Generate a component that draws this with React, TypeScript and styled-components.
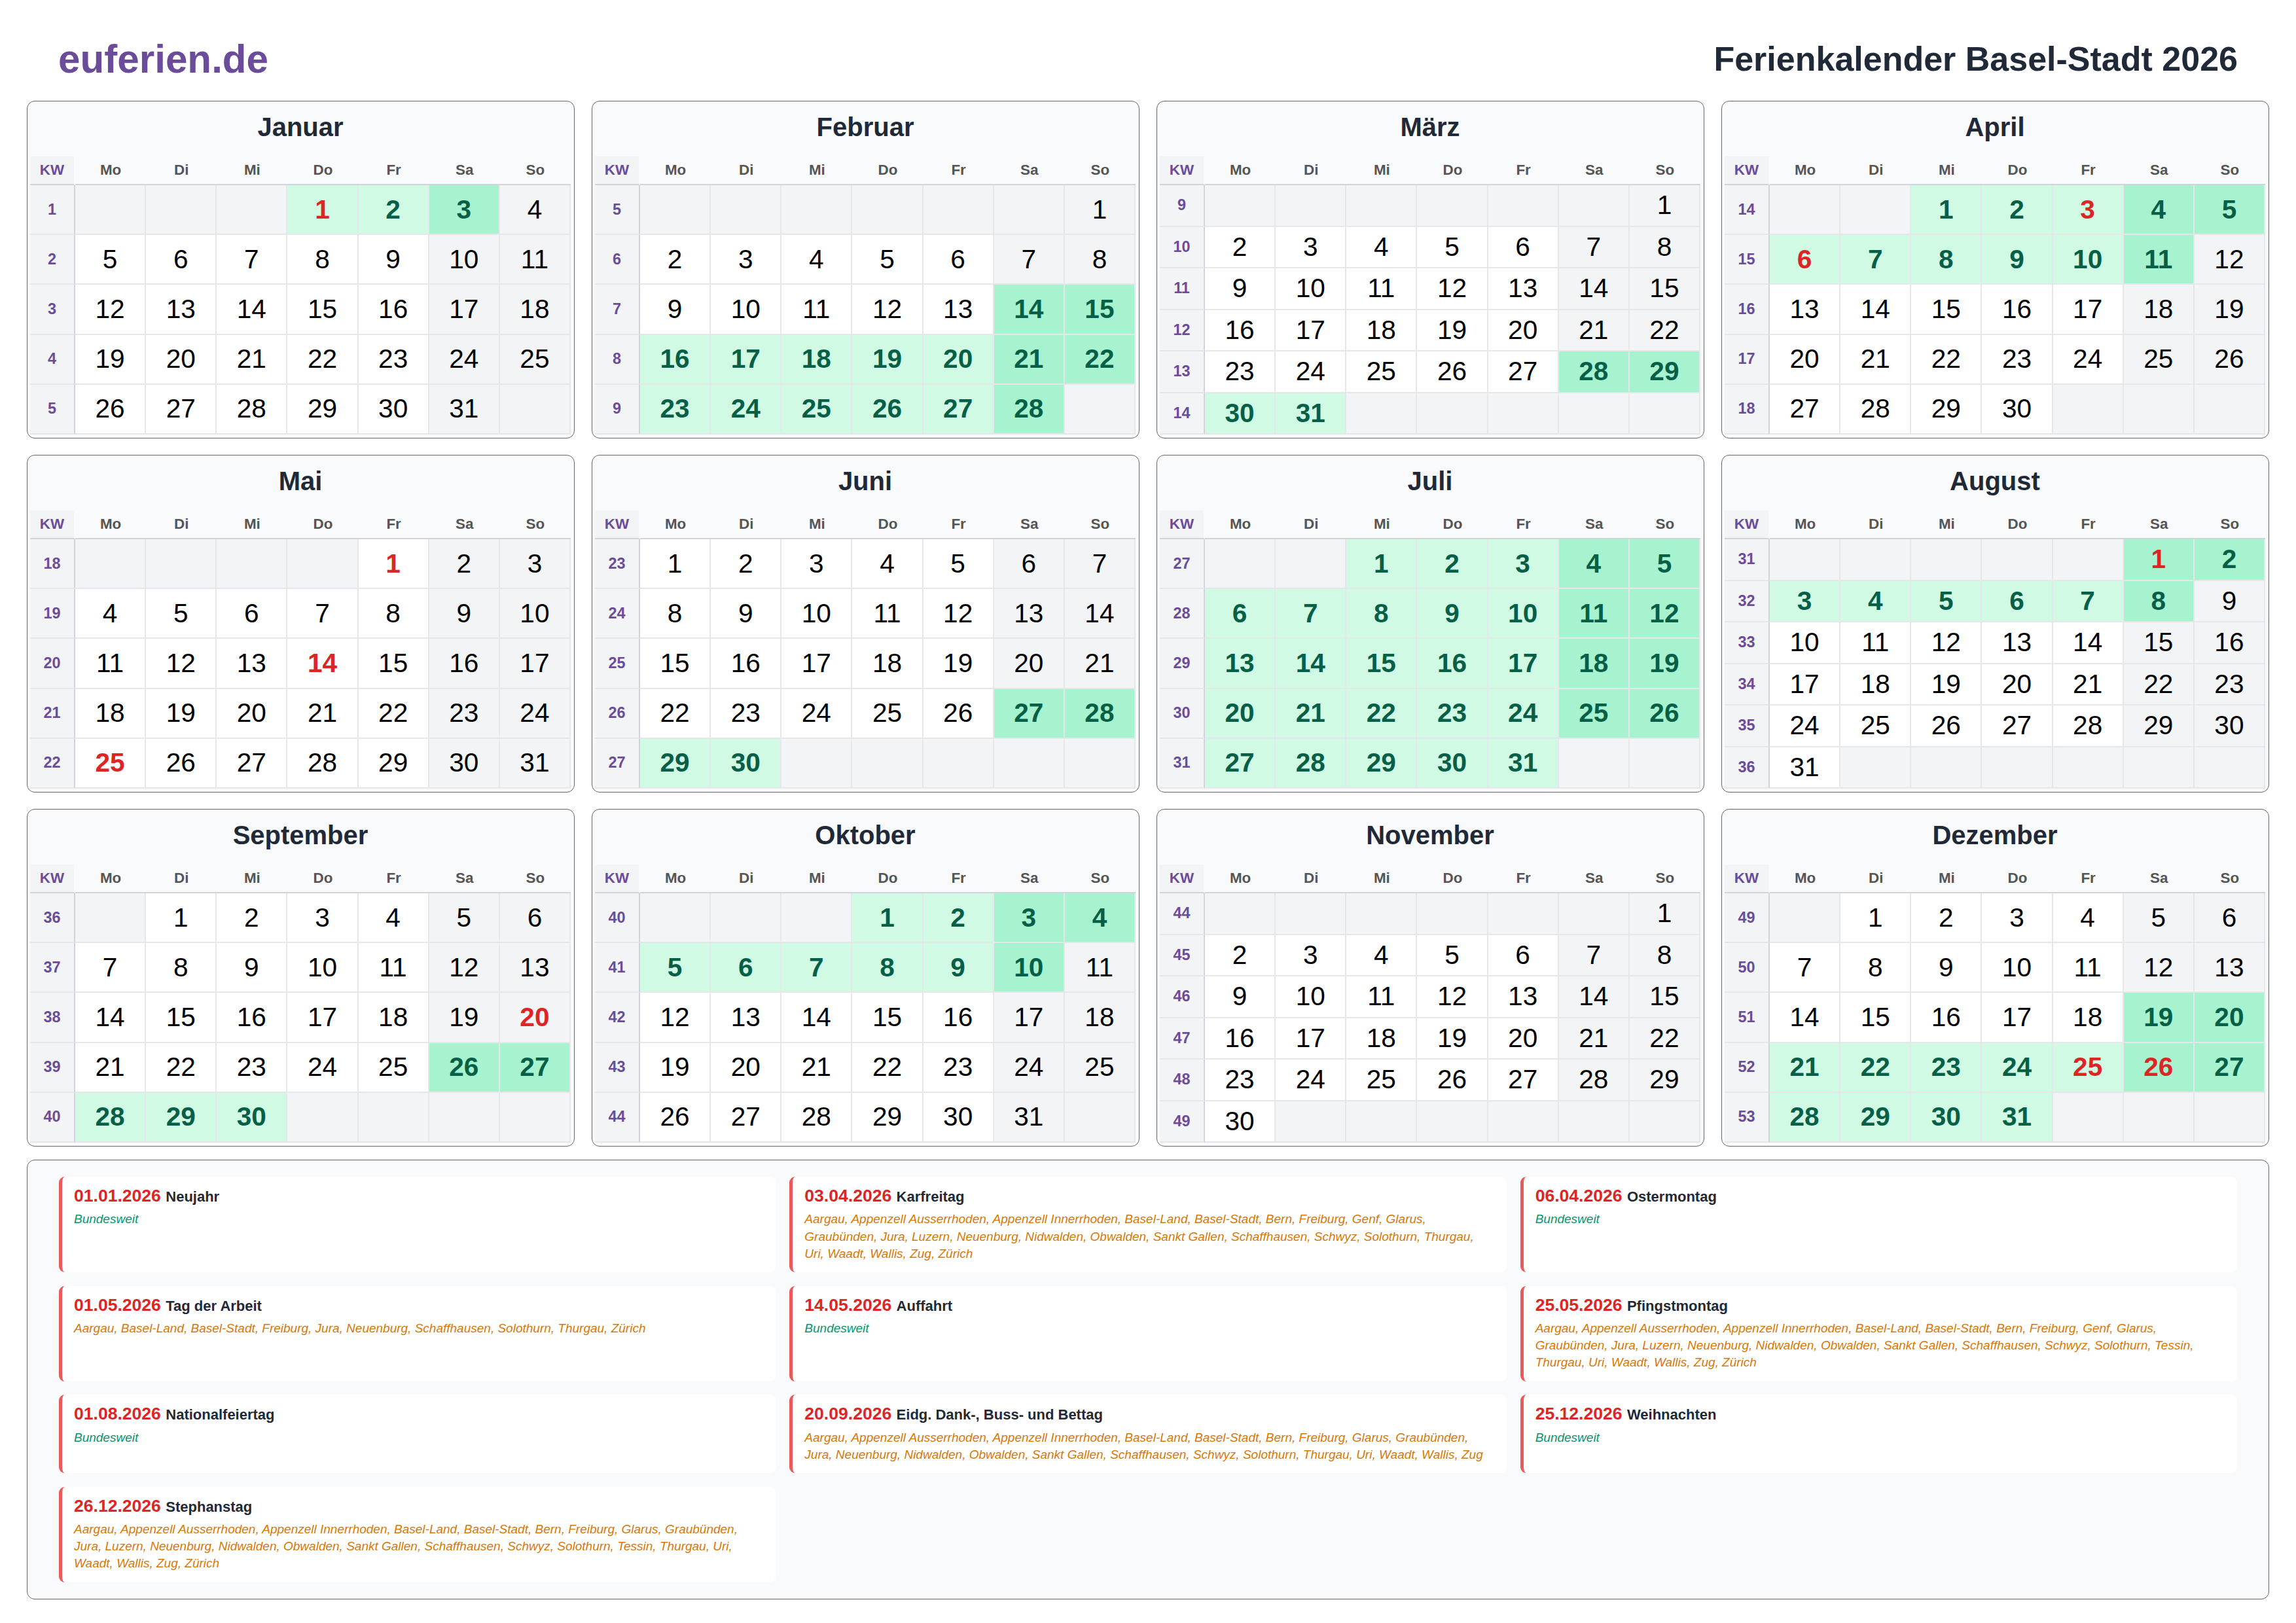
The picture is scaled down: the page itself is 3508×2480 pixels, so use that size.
import React from "react";
import styled, { createGlobalStyle } from "styled-components";

const GlobalStyle = createGlobalStyle`
  html, body {
    margin: 0;
    padding: 0;
    background: #fff;
    font-family: "Liberation Sans", Arial, sans-serif;
  }
  * {
    box-sizing: border-box;
  }
`;

const Page = styled.div`
  width: 3508px;
  height: 2480px;
  padding: 26px 41px 0;
`;

const Header = styled.header`
  display: flex;
  align-items: center;
  justify-content: space-between;
  height: 128px;
  padding: 0 48px;
`;

const Logo = styled.div`
  font-size: 60.2px;
  font-weight: bold;
  color: #6b4c9a;
`;

const PageTitle = styled.h1`
  margin: 0;
  font-size: 52px;
  font-weight: bold;
  color: #1f2937;
`;

const MonthGrid = styled.div`
  display: grid;
  grid-template-columns: repeat(4, 837px);
  grid-template-rows: repeat(3, 516px);
  column-gap: 26px;
  row-gap: 25px;
`;

const MonthCard = styled.section`
  display: flex;
  flex-direction: column;
  padding: 0 5px 5px 4px;
  background: #f9fafb;
  border: 1px solid #666;
  border-radius: 12px;
`;

const MonthTitle = styled.h2`
  display: flex;
  align-items: center;
  justify-content: center;
  height: 79px;
  margin: 0 0 5px;
  font-size: 40px;
  font-weight: bold;
  color: #1f2937;
`;

const Table = styled.div<{ $rows: number }>`
  flex: 1;
  display: grid;
  grid-template-columns: 69px repeat(7, 1fr);
  grid-template-rows: 44px repeat(${(p) => p.$rows}, 1fr);
  min-height: 0;
`;

const WeekdayCell = styled.div`
  display: flex;
  align-items: center;
  justify-content: center;
  border-bottom: 2px solid #d1d5db;
  font-size: 22.4px;
  font-weight: bold;
  color: #555;
`;

const KwHeadCell = styled(WeekdayCell)`
  border-right: 2px solid transparent;
  background: #f3f4f6;
  background-clip: padding-box;
  color: #6b4c9a;
`;

const KwCell = styled.div`
  display: flex;
  align-items: center;
  justify-content: center;
  background: #f3f4f6;
  border-right: 2px solid #d1d5db;
  border-bottom: 2px solid #e5e7eb;
  font-size: 23.4px;
  font-weight: bold;
  color: #6b4c9a;
`;

type DayKind = "empty" | "work" | "weekend" | "break" | "breakWeekend";

const dayBackgrounds: Record<DayKind, string> = {
  empty: "#f3f4f6",
  work: "#fff",
  weekend: "#f3f4f6",
  break: "#d1fae5",
  breakWeekend: "#a7f3d0",
};

const DayCell = styled.div<{ $kind: DayKind; $onBreak: boolean; $publicHoliday: boolean }>`
  display: flex;
  align-items: center;
  justify-content: center;
  background: ${(p) => dayBackgrounds[p.$kind]};
  border-right: 2px solid #e5e7eb;
  border-bottom: 2px solid #e5e7eb;
  font-size: 40.6px;
  font-weight: ${(p) => (p.$onBreak || p.$publicHoliday ? "bold" : "normal")};
  color: ${(p) => (p.$publicHoliday ? "#dc2626" : p.$onBreak ? "#065f46" : "#000")};
`;

const Legend = styled.section`
  display: grid;
  grid-template-columns: repeat(3, 1fr);
  column-gap: 21px;
  row-gap: 20.6px;
  margin-top: 20px;
  padding: 25px 48px;
  background: #f9fafb;
  border: 1px solid #666;
  border-radius: 12px;
`;

const LegendItem = styled.article`
  padding: 15px 18px;
  background: #fff;
  border-left: 5px solid #ea5a5a;
  border-radius: 9px;
`;

const LegendTitle = styled.div`
  margin-bottom: 7.3px;
  font-size: 26.56px;
  line-height: 29px;
  font-weight: bold;
`;

const LegendDate = styled.span`
  color: #dc2626;
`;

const LegendName = styled.span`
  font-size: 22px;
  color: #1f2937;
`;

const LegendRegions = styled.div<{ $nationwide: boolean }>`
  font-size: 19px;
  line-height: 26.25px;
  font-style: italic;
  color: ${(p) => (p.$nationwide ? "#059669" : "#d97706")};
`;

const MONTHS = [
  "Januar", "Februar", "März", "April", "Mai", "Juni",
  "Juli", "August", "September", "Oktober", "November", "Dezember",
];
const WEEKDAYS = ["Mo", "Di", "Mi", "Do", "Fr", "Sa", "So"];

// month is 1-based, ranges are inclusive
const BREAKS: [number, number, number, number][] = [
  [1, 1, 1, 3],
  [2, 14, 2, 28],
  [3, 28, 4, 11],
  [6, 27, 8, 8],
  [9, 26, 10, 10],
  [12, 19, 12, 31],
];

const PUBLIC_HOLIDAYS = ["1-1", "4-3", "4-6", "5-1", "5-14", "5-25", "8-1", "9-20", "12-25", "12-26"];

const HOLIDAYS = [
  { date: "01.01.2026", name: "Neujahr", regions: "Bundesweit" },
  {
    date: "03.04.2026",
    name: "Karfreitag",
    regions:
      "Aargau, Appenzell Ausserrhoden, Appenzell Innerrhoden, Basel-Land, Basel-Stadt, Bern, Freiburg, Genf, Glarus, Graubünden, Jura, Luzern, Neuenburg, Nidwalden, Obwalden, Sankt Gallen, Schaffhausen, Schwyz, Solothurn, Thurgau, Uri, Waadt, Wallis, Zug, Zürich",
  },
  { date: "06.04.2026", name: "Ostermontag", regions: "Bundesweit" },
  {
    date: "01.05.2026",
    name: "Tag der Arbeit",
    regions:
      "Aargau, Basel-Land, Basel-Stadt, Freiburg, Jura, Neuenburg, Schaffhausen, Solothurn, Thurgau, Zürich",
  },
  { date: "14.05.2026", name: "Auffahrt", regions: "Bundesweit" },
  {
    date: "25.05.2026",
    name: "Pfingstmontag",
    regions:
      "Aargau, Appenzell Ausserrhoden, Appenzell Innerrhoden, Basel-Land, Basel-Stadt, Bern, Freiburg, Genf, Glarus, Graubünden, Jura, Luzern, Neuenburg, Nidwalden, Obwalden, Sankt Gallen, Schaffhausen, Schwyz, Solothurn, Tessin, Thurgau, Uri, Waadt, Wallis, Zug, Zürich",
  },
  { date: "01.08.2026", name: "Nationalfeiertag", regions: "Bundesweit" },
  {
    date: "20.09.2026",
    name: "Eidg. Dank-, Buss- und Bettag",
    regions:
      "Aargau, Appenzell Ausserrhoden, Appenzell Innerrhoden, Basel-Land, Basel-Stadt, Bern, Freiburg, Glarus, Graubünden, Jura, Neuenburg, Nidwalden, Obwalden, Sankt Gallen, Schaffhausen, Schwyz, Solothurn, Thurgau, Uri, Waadt, Wallis, Zug",
  },
  { date: "25.12.2026", name: "Weihnachten", regions: "Bundesweit" },
  {
    date: "26.12.2026",
    name: "Stephanstag",
    regions:
      "Aargau, Appenzell Ausserrhoden, Appenzell Innerrhoden, Basel-Land, Basel-Stadt, Bern, Freiburg, Glarus, Graubünden, Jura, Luzern, Neuenburg, Nidwalden, Obwalden, Sankt Gallen, Schaffhausen, Schwyz, Solothurn, Tessin, Thurgau, Uri, Waadt, Wallis, Zug, Zürich",
  },
];

const YEAR = 2026;
const DAY_MS = 86400000;

// time is the Monday of the week
const isoWeek = (time: number) => {
  const thursday = new Date(time + 3 * DAY_MS);
  const yearStart = Date.UTC(thursday.getUTCFullYear(), 0, 1);
  return 1 + Math.floor((thursday.getTime() - yearStart) / (7 * DAY_MS));
};

const isOnBreak = (month: number, day: number) =>
  BREAKS.some(([m1, d1, m2, d2]) => {
    const key = month * 100 + day;
    return key >= m1 * 100 + d1 && key <= m2 * 100 + d2;
  });

const buildWeeks = (month: number) => {
  const first = Date.UTC(YEAR, month - 1, 1);
  const days = new Date(Date.UTC(YEAR, month, 0)).getUTCDate();
  const lead = (new Date(first).getUTCDay() + 6) % 7;
  const weeks: { kw: number; days: (number | null)[] }[] = [];
  for (let i = 0; i < Math.ceil((lead + days) / 7); i++) {
    const row: (number | null)[] = [];
    for (let j = 0; j < 7; j++) {
      const n = i * 7 + j - lead + 1;
      row.push(n >= 1 && n <= days ? n : null);
    }
    weeks.push({ kw: isoWeek(first + (i * 7 - lead) * DAY_MS), days: row });
  }
  return weeks;
};

const Month = ({ month }: { month: number }) => {
  const weeks = buildWeeks(month);
  return (
    <MonthCard>
      <MonthTitle>{MONTHS[month - 1]}</MonthTitle>
      <Table $rows={weeks.length}>
        <KwHeadCell>KW</KwHeadCell>
        {WEEKDAYS.map((d) => (
          <WeekdayCell key={d}>{d}</WeekdayCell>
        ))}
        {weeks.map((week) => (
          <React.Fragment key={week.kw}>
            <KwCell>{week.kw}</KwCell>
            {week.days.map((day, i) => {
              const weekend = i >= 5;
              const onBreak = day !== null && isOnBreak(month, day);
              const publicHoliday = day !== null && PUBLIC_HOLIDAYS.includes(`${month}-${day}`);
              let kind: DayKind = "empty";
              if (day !== null) {
                if (onBreak) kind = weekend ? "breakWeekend" : "break";
                else kind = weekend ? "weekend" : "work";
              }
              return (
                <DayCell key={i} $kind={kind} $onBreak={onBreak} $publicHoliday={publicHoliday}>
                  {day}
                </DayCell>
              );
            })}
          </React.Fragment>
        ))}
      </Table>
    </MonthCard>
  );
};

export default function App() {
  return (
    <>
      <GlobalStyle />
      <Page>
        <Header>
          <Logo>euferien.de</Logo>
          <PageTitle>Ferienkalender Basel-Stadt 2026</PageTitle>
        </Header>
        <MonthGrid>
          {MONTHS.map((name, i) => (
            <Month key={name} month={i + 1} />
          ))}
        </MonthGrid>
        <Legend>
          {HOLIDAYS.map((h) => (
            <LegendItem key={h.date}>
              <LegendTitle>
                <LegendDate>{h.date}</LegendDate> <LegendName>{h.name}</LegendName>
              </LegendTitle>
              <LegendRegions $nationwide={h.regions === "Bundesweit"}>{h.regions}</LegendRegions>
            </LegendItem>
          ))}
        </Legend>
      </Page>
    </>
  );
}
